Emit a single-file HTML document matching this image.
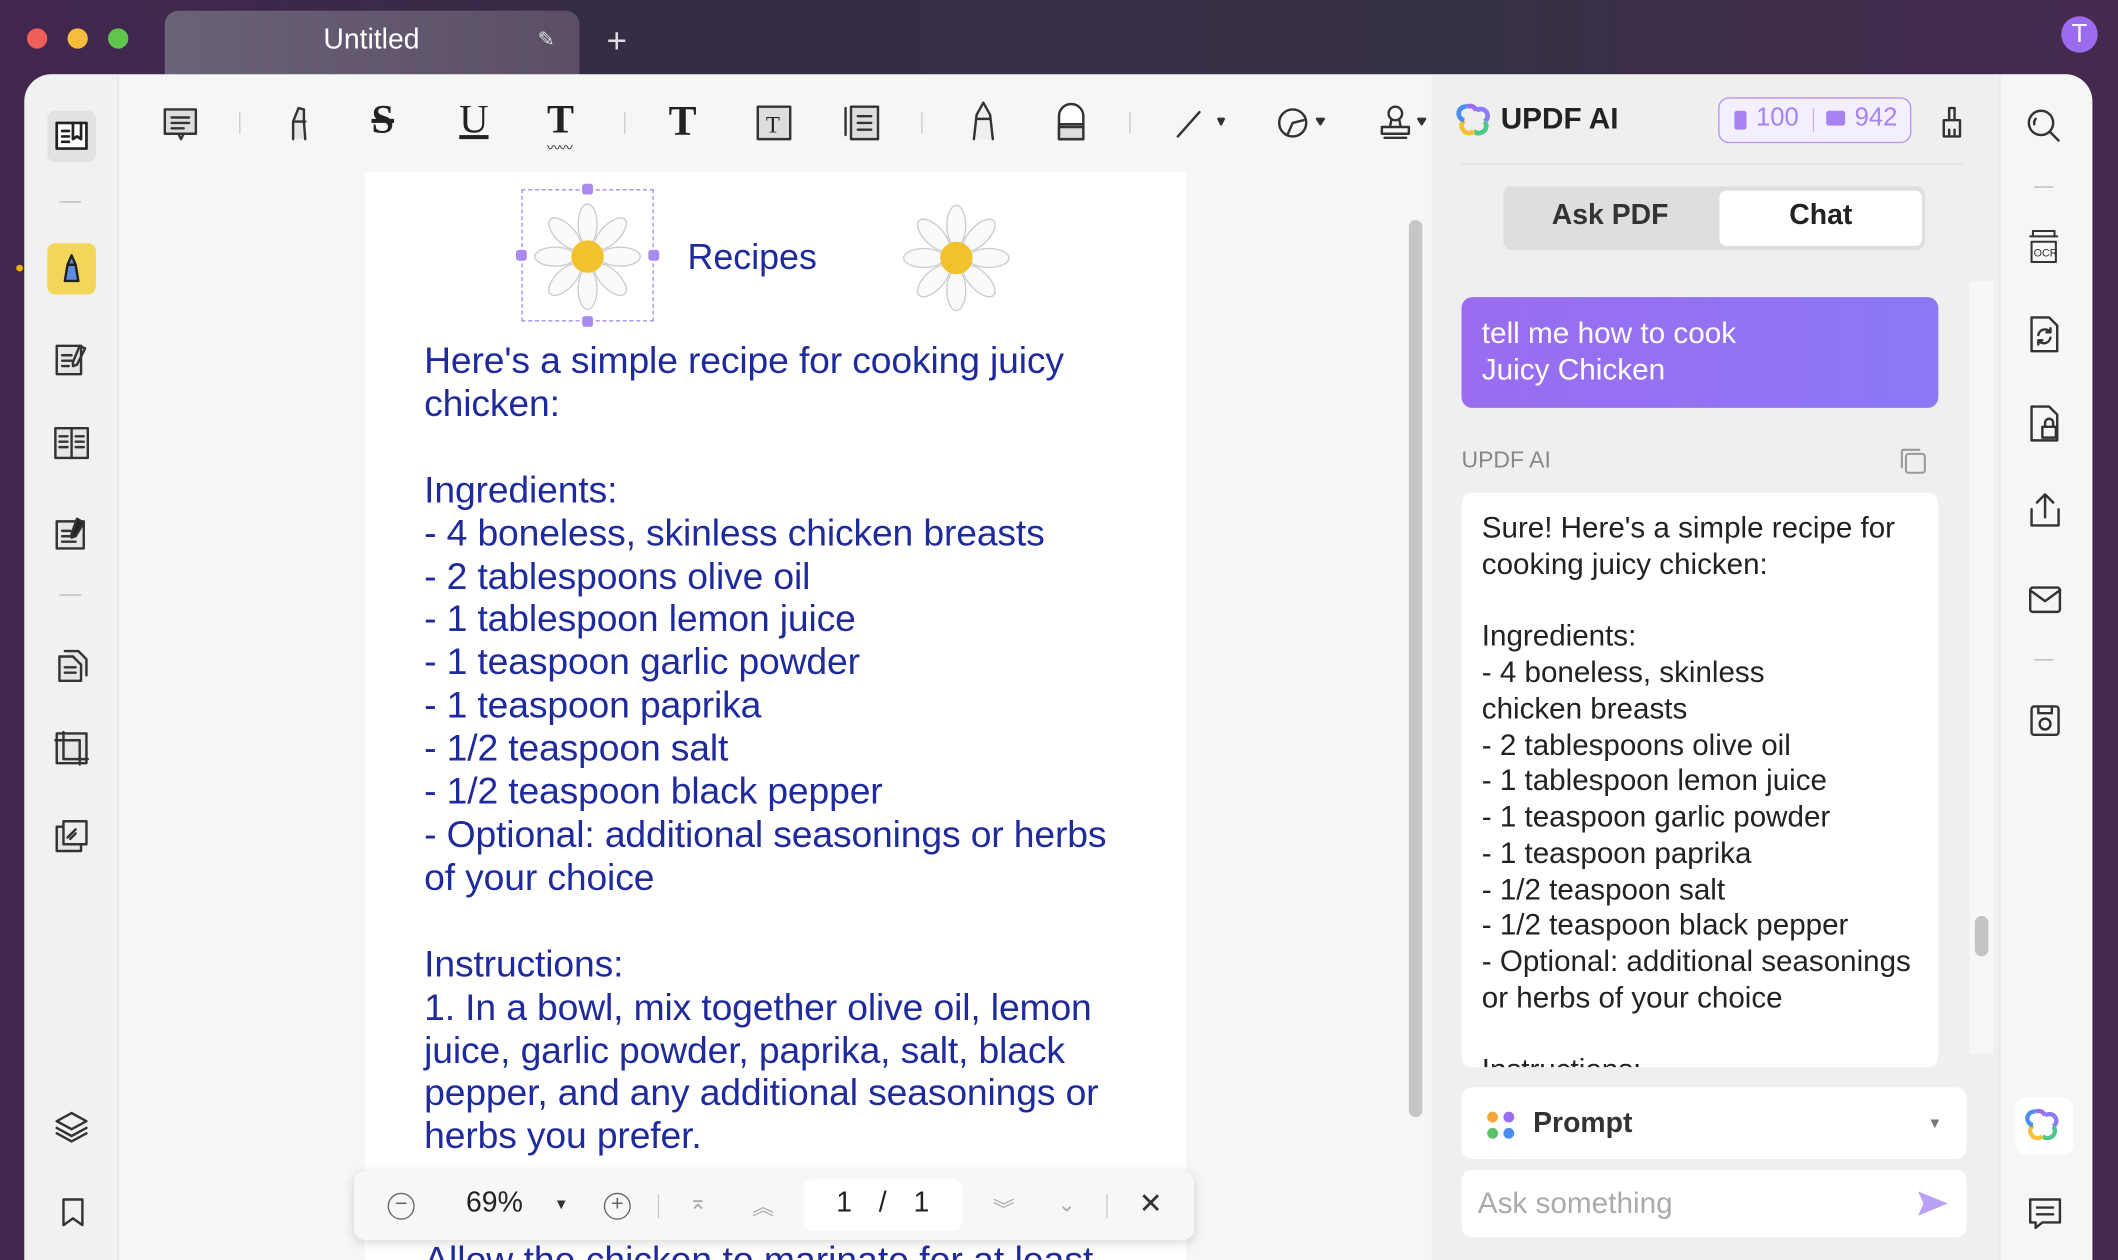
<!DOCTYPE html>
<html><head><meta charset="utf-8"><style>
*{margin:0;padding:0;box-sizing:border-box}
html,body{width:2118px;height:1260px;overflow:hidden;background:#3a2a48}
#s{width:1568px;height:933px;transform:scale(1.35077);transform-origin:0 0;position:relative;font-family:"Liberation Sans",sans-serif;background:linear-gradient(90deg,#43264f 0%,#352c45 30%,#363046 70%,#46294f 100%)}
.a{position:absolute}
.dot{position:absolute;width:15px;height:15px;border-radius:50%;top:21px}
.ic{position:absolute;stroke:#333;fill:none;stroke-width:1.8;stroke-linecap:round;stroke-linejoin:round}
.doc{position:absolute;left:314px;top:251px;color:#1f2a9c;font-size:27.6px;line-height:31.9px;white-space:pre;letter-spacing:-0.1px}
.resp{position:absolute;left:1097px;top:378px;color:#222;font-size:21.9px;line-height:26.75px;white-space:pre}
.sep{position:absolute;width:1px;height:16px;background:#ccc;top:83px}
</style></head><body><div id="s">
<div class="dot" style="left:20px;background:#ee5f57"></div>
<div class="dot" style="left:50px;background:#f5bd3a"></div>
<div class="dot" style="left:80px;background:#5fc64b"></div>
<div class="a" style="left:122px;top:8px;width:307px;height:50px;border-radius:10px 10px 0 0;background:linear-gradient(90deg,#6b6178,#5a4f66)"></div>
<div class="a" style="left:122px;top:18px;width:306px;text-align:center;color:#fff;font-size:21px">Untitled</div>
<div class="a" style="left:398px;top:20px;color:#ddd;font-size:15px">✎</div>
<div class="a" style="left:449px;top:15px;color:#ddd;font-size:26px;font-weight:300">+</div>
<div class="a" style="left:1526px;top:12px;width:27px;height:27px;border-radius:50%;background:#9b6cf0;color:#fff;text-align:center;font-size:19px;line-height:27px">T</div>
<div class="a" style="left:18px;top:55px;width:1531px;height:878px;background:#f6f6f6;border-radius:20px 20px 0 0;overflow:hidden">
 <div class="a" style="left:0;top:0;width:70px;height:878px;background:#f1f1f1;border-right:1px solid #e6e6e6"></div>
 <div class="a" style="left:1042px;top:0;width:420px;height:878px;background:#efefef"></div>
 <div class="a" style="left:1462px;top:0;width:69px;height:878px;background:#f6f6f6;border-left:1px solid #e6e6e6"></div>
</div>
<div class="a" style="left:35px;top:82px;width:36px;height:38px;background:#e2e2e2;border-radius:6px"></div>
<svg class="ic" style="left:39px;top:88px" width="28" height="28"><rect x="3" y="3" width="22" height="19" fill="#fff" stroke="#222" stroke-width="2"/><path d="M7 9h5M7 13h5M7 17h5M15 3v12l3-2 3 2V3" stroke="#222" stroke-width="2"/></svg>
<div class="a" style="left:44px;top:149px;width:16px;height:1px;background:#bbb"></div>
<div class="a" style="left:12px;top:196px;width:5px;height:5px;border-radius:50%;background:#f0b400"></div>
<div class="a" style="left:35px;top:180px;width:36px;height:38px;background:#f2d65a;border-radius:6px"></div>
<svg class="ic" style="left:39px;top:185px" width="28" height="28"><path d="M9 23l2-12h6l2 12zM11 11l3-7 3 7" fill="#5a8ee0" stroke="#222"/></svg>
<svg class="ic" style="left:39px;top:252px" width="28" height="28"><rect x="3" y="4" width="18" height="21" fill="#e6e6e6"/><path d="M7 11h7M7 15h7M7 19h5M20 4l4 2-6 12-3 1 0-3z"/></svg>
<svg class="ic" style="left:39px;top:314px" width="28" height="28"><rect x="2" y="3" width="24" height="22" fill="#e6e6e6"/><path d="M14 3v22M5 9h6M5 13h6M5 17h6M17 9h6M17 13h6M17 17h6"/></svg>
<svg class="ic" style="left:39px;top:381px" width="28" height="28"><rect x="3" y="5" width="20" height="20" fill="#e6e6e6"/><path d="M7 12h6M7 16h6M7 20h10M18 3l5 3-6 10-3 1 0-3z" fill="#222"/></svg>
<div class="a" style="left:44px;top:440px;width:16px;height:1px;background:#bbb"></div>
<svg class="ic" style="left:39px;top:478px" width="28" height="28"><path d="M5 8h10l6 6v12H5zM9 4h10l6 6v12" fill="#e6e6e6"/><path d="M9 16h8M9 20h8"/></svg>
<svg class="ic" style="left:39px;top:540px" width="28" height="28"><rect x="3" y="3" width="22" height="22" fill="#e6e6e6"/><path d="M8 2v20h18M2 8h18v18"/></svg>
<svg class="ic" style="left:39px;top:605px" width="28" height="28"><rect x="3" y="7" width="18" height="18" fill="#e6e6e6"/><rect x="8" y="3" width="17" height="17" fill="#eee"/><path d="M11 15l6-6M13 16l4-4"/></svg>
<svg class="ic" style="left:39px;top:820px" width="28" height="28"><path d="M14 4l11 6-11 6-11-6zM3 15l11 6 11-6M3 19l11 6 11-6"/></svg>
<svg class="ic" style="left:43px;top:886px" width="22" height="24"><path d="M4 2h14v19l-7-5-7 5z"/></svg>
<svg class="ic" style="left:120px;top:78px" width="28" height="28"><rect x="2" y="3" width="23" height="18" fill="#ddd"/><path d="M7 9h13M7 13h13M7 17h9M12 21l2 4 2-4"/></svg>
<div class="sep" style="left:177px"></div>
<svg class="ic" style="left:209px;top:76px" width="28" height="30"><path d="M8 27V14l4-10 4 1v9l1 13" fill="#e5e5e5"/><path d="M8 14h9"/></svg>
<div class="a" style="left:275px;top:72px;font-size:30px;font-family:'Liberation Serif',serif;font-weight:bold;color:#222;text-decoration:line-through">S</div>
<div class="a" style="left:340px;top:72px;font-size:30px;font-family:'Liberation Serif',serif;color:#222;text-decoration:underline">U</div>
<div class="a" style="left:405px;top:72px;font-size:30px;font-family:'Liberation Serif',serif;font-weight:bold;color:#222">T</div>
<div class="a" style="left:405px;top:101px;font-size:10px;color:#222;letter-spacing:-1px">〰〰</div>
<div class="sep" style="left:462px"></div>
<div class="a" style="left:495px;top:72px;font-size:31px;font-family:'Liberation Serif',serif;font-weight:bold;color:#222">T</div>
<svg class="ic" style="left:557px;top:76px" width="32" height="30"><rect x="4" y="3" width="24" height="24" fill="#ddd"/><text x="10" y="22" font-size="17" font-family="Liberation Serif" fill="#222" stroke="none">T</text></svg>
<svg class="ic" style="left:622px;top:76px" width="32" height="30"><rect x="8" y="3" width="20" height="24" fill="#ddd"/><path d="M13 10h10M13 15h10M13 20h10M4 4v20"/></svg>
<div class="sep" style="left:682px"></div>
<svg class="ic" style="left:714px;top:74px" width="28" height="32"><path d="M7 29l2-18 5-9 5 9 2 18" fill="#eee"/><path d="M9 14h10"/></svg>
<svg class="ic" style="left:779px;top:76px" width="28" height="30"><path d="M5 27V10a9 9 0 0118 0v17z" fill="#fff"/><rect x="5" y="18" width="18" height="9" fill="#ddd"/><path d="M5 16h18"/></svg>
<div class="sep" style="left:836px"></div>
<svg class="ic" style="left:868px;top:78px" width="42" height="28"><path d="M4 23L20 5"/><path d="M34 10l4 0-2 4z" fill="#222"/></svg>
<svg class="ic" style="left:943px;top:76px" width="42" height="30"><circle cx="14" cy="15" r="10"/><path d="M10 24l4-9 8-2"/><path d="M32 12l5 0-2.5 4z" fill="#222"/></svg>
<svg class="ic" style="left:1018px;top:76px" width="42" height="30"><circle cx="15" cy="8" r="5"/><path d="M12 13l-1 5h8l-1-5M5 18h20v5H5zM7 26h16"/><path d="M32 12l5 0-2.5 4z" fill="#222"/></svg>
<svg class="a" style="left:1078px;top:75px" width="28" height="28"><g fill="none" stroke-width="3.5"><path d="M8 4a5 5 0 017 3" stroke="#9b6cf0"/><path d="M15 7a5 5 0 018 2 5 5 0 01-2 6" stroke="#8a7df7"/><path d="M21 15a5 5 0 01-2 8 5 5 0 01-6-1" stroke="#4ac98b"/><path d="M13 22a5 5 0 01-8-1 5 5 0 011-7" stroke="#f5c13a"/><path d="M6 14a5 5 0 012-10" stroke="#4a8ef0"/></g></svg>
<div class="a" style="left:1111px;top:75px;font-size:22px;font-weight:bold;color:#222">UPDF AI</div>
<div class="a" style="left:1272px;top:72px;width:143px;height:34px;border:1.5px solid #b594f5;border-radius:8px;background:#f4efff"></div>
<div class="a" style="left:1284px;top:82px;width:9px;height:14px;background:#a782f3;border-radius:2px"></div>
<div class="a" style="left:1300px;top:77px;font-size:19px;color:#a782f3">100</div>
<div class="a" style="left:1342px;top:80px;width:1px;height:18px;background:#c9b5f5"></div>
<div class="a" style="left:1352px;top:82px;width:14px;height:11px;background:#a782f3;border-radius:2px"></div>
<div class="a" style="left:1373px;top:77px;font-size:19px;color:#a782f3">942</div>
<svg class="ic" style="left:1434px;top:77px" width="22" height="28"><path d="M9 3h4v9H9zM5 12h12v12H5zM9 19v5M13 19v5"/></svg>
<div class="a" style="left:1082px;top:121px;width:371px;height:1px;background:#ddd"></div>
<div class="a" style="left:1113px;top:138px;width:312px;height:47px;background:#dedede;border-radius:6px"></div>
<div class="a" style="left:1273px;top:141px;width:150px;height:41px;background:#fff;border-radius:5px"></div>
<div class="a" style="left:1113px;top:148px;width:158px;text-align:center;font-size:21px;font-weight:bold;color:#333">Ask PDF</div>
<div class="a" style="left:1273px;top:148px;width:150px;text-align:center;font-size:21px;font-weight:bold;color:#222">Chat</div>
<div class="a" style="left:1458px;top:208px;width:18px;height:572px;background:#f7f7f7"></div>
<div class="a" style="left:1462px;top:678px;width:10px;height:30px;background:#c4c4c4;border-radius:5px"></div>
<div class="a" style="left:1082px;top:220px;width:353px;height:82px;border-radius:8px;background:linear-gradient(90deg,#9b6cf0,#8b78f5)"></div>
<div class="a" style="left:1097px;top:233px;color:#fff;font-size:22px;line-height:27px">tell me how to cook<br>Juicy Chicken</div>
<div class="a" style="left:1082px;top:331px;color:#888;font-size:17px">UPDF AI</div>
<svg class="ic" style="left:1405px;top:330px;stroke:#999;stroke-width:1.5" width="24" height="24"><rect x="6" y="6" width="14" height="14" rx="2"/><path d="M3 16V4a1 1 0 011-1h12"/></svg>
<div class="a" style="left:1082px;top:365px;width:353px;height:425px;background:#fff;border-radius:8px;overflow:hidden">
<div class="resp" style="left:15px;top:13px">Sure! Here's a simple recipe for
cooking juicy chicken:

Ingredients:
- 4 boneless, skinless
chicken breasts
- 2 tablespoons olive oil
- 1 tablespoon lemon juice
- 1 teaspoon garlic powder
- 1 teaspoon paprika
- 1/2 teaspoon salt
- 1/2 teaspoon black pepper
- Optional: additional seasonings
or herbs of your choice

Instructions:</div></div>
<div class="a" style="left:1082px;top:805px;width:374px;height:53px;background:#fff;border-radius:8px"></div>
<div class="a" style="left:1101px;top:823px;width:8px;height:8px;border-radius:50%;background:#f5a63a"></div>
<div class="a" style="left:1113px;top:823px;width:8px;height:8px;border-radius:50%;background:#9b6cf0"></div>
<div class="a" style="left:1101px;top:835px;width:8px;height:8px;border-radius:50%;background:#5ac46b"></div>
<div class="a" style="left:1113px;top:835px;width:8px;height:8px;border-radius:50%;background:#4a8ef0"></div>
<div class="a" style="left:1135px;top:820px;font-size:21px;font-weight:bold;color:#333">Prompt</div>
<div class="a" style="left:1427px;top:826px;font-size:11px;color:#777">▼</div>
<div class="a" style="left:1082px;top:866px;width:374px;height:50px;background:#fff;border-radius:8px"></div>
<div class="a" style="left:1094px;top:878px;font-size:22px;color:#aaa">Ask something</div>
<svg class="a" style="left:1418px;top:880px" width="26" height="22"><path d="M2 2l22 9-22 9 4-9z" fill="#b9a0f7"/></svg>
<svg class="ic" style="left:1499px;top:79px" width="28" height="28"><circle cx="12" cy="12" r="9"/><path d="M19 19l6 6M8 9a5 5 0 00-1 4"/></svg>
<div class="a" style="left:1506px;top:138px;width:14px;height:1px;background:#bbb"></div>
<svg class="ic" style="left:1499px;top:168px;stroke-width:1.5" width="28" height="30"><path d="M4 7h20M6 7V3h16v4M5 11h18v15H5z"/><text x="6.5" y="22" font-size="8" fill="#333" stroke="none" font-family="Liberation Sans">OCR</text></svg>
<svg class="ic" style="left:1501px;top:233px" width="26" height="30"><path d="M3 2h13l6 6v19H3z"/><path d="M8 15a5 5 0 019-2M17 17a5 5 0 01-9 2M17 10v3h-3M8 22v-3h3"/></svg>
<svg class="ic" style="left:1501px;top:299px" width="26" height="30"><path d="M3 2h13l6 6v19H3z"/><rect x="11" y="17" width="10" height="8"/><path d="M13 17v-3a3 3 0 016 0v3"/></svg>
<svg class="ic" style="left:1500px;top:363px" width="28" height="30"><path d="M14 3v17M8 9l6-6 6 6M4 14v12h20V14"/></svg>
<svg class="ic" style="left:1500px;top:430px" width="28" height="28"><rect x="3" y="5" width="22" height="18" rx="2"/><path d="M3 7l11 8 11-8"/></svg>
<div class="a" style="left:1506px;top:488px;width:14px;height:1px;background:#bbb"></div>
<svg class="ic" style="left:1501px;top:519px" width="26" height="28"><rect x="3" y="4" width="20" height="21" rx="2"/><path d="M8 4v5h10V4"/><circle cx="13" cy="17" r="4"/></svg>
<div class="a" style="left:1492px;top:812px;width:43px;height:43px;background:#fff;border-radius:8px"></div>
<svg class="a" style="left:1499px;top:819px" width="28" height="28"><g fill="none" stroke-width="3.2"><path d="M8 4a5 5 0 017 3" stroke="#9b6cf0"/><path d="M15 7a5 5 0 018 2 5 5 0 01-2 6" stroke="#8a7df7"/><path d="M21 15a5 5 0 01-2 8 5 5 0 01-6-1" stroke="#4ac98b"/><path d="M13 22a5 5 0 01-8-1 5 5 0 011-7" stroke="#f5c13a"/><path d="M6 14a5 5 0 012-10" stroke="#4a8ef0"/></g></svg>
<svg class="ic" style="left:1500px;top:885px" width="28" height="28"><path d="M3 3h22v17H12l-5 4v-4H3z"/><path d="M8 9h12M8 14h12"/></svg>
<div class="a" style="left:270px;top:127px;width:608px;height:806px;background:#fff"></div>
<div class="a" style="left:1043px;top:163px;width:10px;height:664px;background:#c6c6c6;border-radius:5px"></div>
<div class="a" style="left:386px;top:140px;width:98px;height:98px;border:1.5px dashed #a98bf0"></div>
<div class="a" style="left:431px;top:136px;width:8px;height:8px;background:#a98bf0;border-radius:2px"></div>
<div class="a" style="left:431px;top:234px;width:8px;height:8px;background:#a98bf0;border-radius:2px"></div>
<div class="a" style="left:382px;top:185px;width:8px;height:8px;background:#a98bf0;border-radius:2px"></div>
<div class="a" style="left:480px;top:185px;width:8px;height:8px;background:#a98bf0;border-radius:2px"></div>
<svg class="a" style="left:395px;top:150px" width="80" height="80"><g fill="#fafafa" stroke="#ccc" stroke-width="1"><ellipse cx="40" cy="16" rx="7" ry="15"/><ellipse cx="40" cy="64" rx="7" ry="15"/><ellipse cx="16" cy="40" rx="15" ry="7"/><ellipse cx="64" cy="40" rx="15" ry="7"/><ellipse cx="23" cy="23" rx="7" ry="15" transform="rotate(-45 23 23)"/><ellipse cx="57" cy="57" rx="7" ry="15" transform="rotate(-45 57 57)"/><ellipse cx="57" cy="23" rx="7" ry="15" transform="rotate(45 57 23)"/><ellipse cx="23" cy="57" rx="7" ry="15" transform="rotate(45 23 57)"/></g><circle cx="40" cy="40" r="12" fill="#f2c12e"/></svg>
<svg class="a" style="left:668px;top:151px" width="80" height="80"><g fill="#fafafa" stroke="#ccc" stroke-width="1"><ellipse cx="40" cy="16" rx="7" ry="15"/><ellipse cx="40" cy="64" rx="7" ry="15"/><ellipse cx="16" cy="40" rx="15" ry="7"/><ellipse cx="64" cy="40" rx="15" ry="7"/><ellipse cx="23" cy="23" rx="7" ry="15" transform="rotate(-45 23 23)"/><ellipse cx="57" cy="57" rx="7" ry="15" transform="rotate(-45 57 57)"/><ellipse cx="57" cy="23" rx="7" ry="15" transform="rotate(45 57 23)"/><ellipse cx="23" cy="57" rx="7" ry="15" transform="rotate(45 23 57)"/></g><circle cx="40" cy="40" r="12" fill="#f2c12e"/></svg>
<div class="a" style="left:509px;top:175px;font-size:26.5px;color:#1f2a9c">Recipes</div>
<div class="doc">Here's a simple recipe for cooking juicy
chicken:

Ingredients:
- 4 boneless, skinless chicken breasts
- 2 tablespoons olive oil
- 1 tablespoon lemon juice
- 1 teaspoon garlic powder
- 1 teaspoon paprika
- 1/2 teaspoon salt
- 1/2 teaspoon black pepper
- Optional: additional seasonings or herbs
of your choice

Instructions:
1. In a bowl, mix together olive oil, lemon
juice, garlic powder, paprika, salt, black
pepper, and any additional seasonings or
herbs you prefer.
2. Place the chicken breasts in the bowl
Allow the chicken to marinate for at least</div>
<div class="a" style="left:270px;top:856px;width:608px;height:77px;background:#fff;overflow:hidden"><div style="position:absolute;left:44px;top:61px;color:#1f2a9c;font-size:27.6px">Allow the chicken to marinate for at least</div></div>
<div class="a" style="left:262px;top:867px;width:622px;height:51px;background:#f7f7f7;border-radius:8px;box-shadow:0 2px 8px rgba(0,0,0,.15)"></div>
<div class="a" style="left:287px;top:883px;width:20px;height:20px;border:1.5px solid #666;border-radius:50%;text-align:center;line-height:16px;font-size:16px;color:#666">−</div>
<div class="a" style="left:345px;top:879px;font-size:21px;color:#222">69%</div>
<div class="a" style="left:410px;top:886px;font-size:11px;color:#333">▼</div>
<div class="a" style="left:447px;top:883px;width:20px;height:20px;border:1.5px solid #666;border-radius:50%;text-align:center;line-height:16px;font-size:16px;color:#666">+</div>
<div class="a" style="left:487px;top:884px;width:1px;height:18px;background:#ccc"></div>
<div class="a" style="left:510px;top:880px;font-size:16px;color:#aaa">⌅</div>
<div class="a" style="left:557px;top:880px;font-size:16px;color:#aaa">︽</div>
<div class="a" style="left:595px;top:873px;width:117px;height:38px;background:#fff;border-radius:6px"></div>
<div class="a" style="left:595px;top:879px;width:117px;text-align:center;font-size:21px;color:#222;word-spacing:14px">1 / 1</div>
<div class="a" style="left:735px;top:882px;font-size:16px;color:#aaa">︾</div>
<div class="a" style="left:783px;top:882px;font-size:16px;color:#aaa">⌄</div>
<div class="a" style="left:819px;top:884px;width:1px;height:18px;background:#ccc"></div>
<div class="a" style="left:843px;top:879px;font-size:21px;color:#333">✕</div>
</div></body></html>
